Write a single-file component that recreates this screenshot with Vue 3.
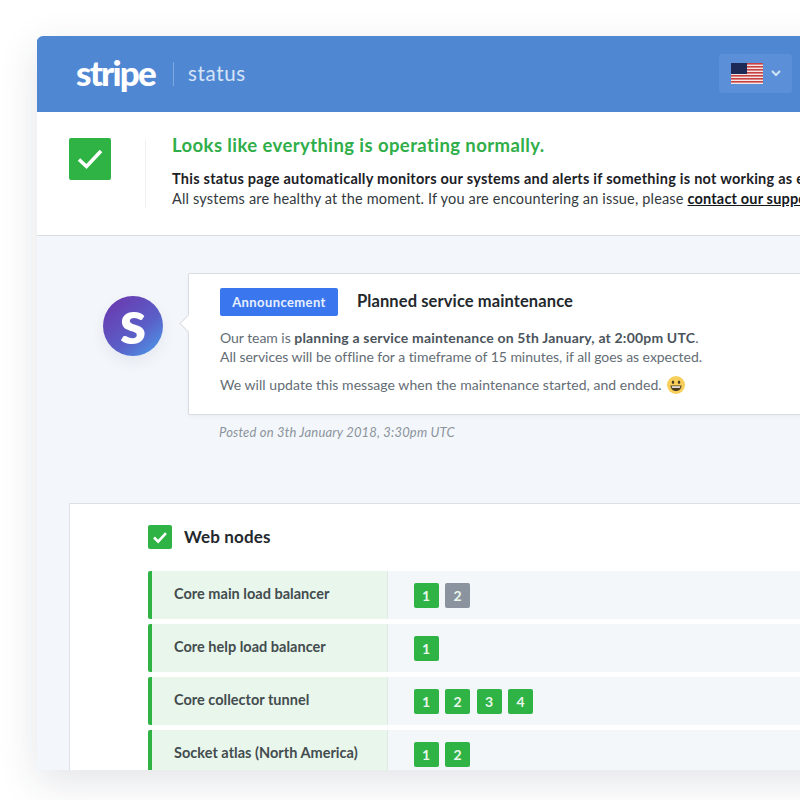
<script setup>
const rows = [
  { name: 'Core main load balancer', chips: [{ n: 1, ok: true }, { n: 2, ok: false }] },
  { name: 'Core help load balancer', chips: [{ n: 1, ok: true }] },
  { name: 'Core collector tunnel', chips: [{ n: 1, ok: true }, { n: 2, ok: true }, { n: 3, ok: true }, { n: 4, ok: true }] },
  { name: 'Socket atlas (North America)', chips: [{ n: 1, ok: true }, { n: 2, ok: true }] },
]
const stripes = [0, 1, 2, 3, 4, 5, 6]
</script>

<template>
  <div class="page">
    <div class="window">
      <header class="top">
        <span class="logo">stripe</span>
        <span class="sep"></span>
        <span class="product">status</span>
        <div class="lang">
          <svg class="flag" width="32" height="21" viewBox="0 0 32 21">
            <rect width="32" height="21" fill="#f5e6e6" />
            <rect v-for="s in stripes" :key="s" x="0" :y="s * 3" width="32" height="1.6" fill="#c8403f" />
            <rect width="16" height="11" fill="#1c2a55" />
          </svg>
          <svg width="12" height="8" viewBox="0 0 12 8"><path d="M2 2l4 4 4-4" fill="none" stroke="#cfe0f5" stroke-width="2.200" /></svg>
        </div>
      </header>

      <section class="status">
        <div class="status-icon">
          <svg width="26" height="22" viewBox="0 0 26 22"><path d="M2 11.5l7.5 7L24 3" fill="none" stroke="#fff" stroke-width="3.6" /></svg>
        </div>
        <div class="status-rule"></div>
        <div class="status-text">
          <h1>Looks like everything is operating normally.</h1>
          <p class="strong">This status page automatically monitors our systems and alerts if something is not working as expected.</p>
          <p>All systems are healthy at the moment. If you are encountering an issue, please <a>contact our support</a> team.</p>
        </div>
      </section>

      <main class="content">
        <div class="announce">
          <div class="avatar">s</div>
          <div class="announce-body">
            <div class="card">
              <div class="card-head">
                <span class="badge">Announcement</span>
                <h2>Planned service maintenance</h2>
              </div>
              <p>Our team is <b>planning a service maintenance on 5th January, at 2:00pm UTC</b>.<br />All services will be offline for a timeframe of 15 minutes, if all goes as expected.</p>
              <p class="last">We will update this message when the maintenance started, and ended.
                <svg class="emoji" width="18" height="18" viewBox="0 0 18 18">
                  <circle cx="9" cy="9" r="9" fill="#f7cf5a" />
                  <ellipse cx="6" cy="6.2" rx="1.2" ry="1.7" fill="#4b3b20" />
                  <ellipse cx="12" cy="6.2" rx="1.2" ry="1.7" fill="#4b3b20" />
                  <path d="M3.5 9.5h11c0 3.4-2.4 5.5-5.500 5.500S3.500 12.900 3.500 9.500z" fill="#4b3b20" />
                  <path d="M4.800 10.300h8.400v1.500H4.800z" fill="#fff" />
                </svg>
              </p>
            </div>
            <div class="posted">Posted on 3th January 2018, 3:30pm UTC</div>
          </div>
        </div>

        <div class="nodes">
          <div class="nodes-head">
            <div class="mini-check">
              <svg width="16" height="13" viewBox="0 0 14 12"><path d="M1.500 6l3.800 3.800L12.500 2" fill="none" stroke="#fff" stroke-width="2.400" /></svg>
            </div>
            <h3>Web nodes</h3>
          </div>
          <div class="rows">
            <div v-for="r in rows" :key="r.name" class="row">
              <div class="row-name">{{ r.name }}</div>
              <div class="row-chips">
                <span v-for="c in r.chips" :key="c.n" class="chip" :class="{ off: !c.ok }">{{ c.n }}</span>
              </div>
            </div>
          </div>
        </div>
      </main>
    </div>
  </div>
</template>

<style>
html, body { margin: 0; background: #fff; overflow: hidden; }
</style>

<style scoped>
.page {
  width: 800px;
  height: 800px;
  overflow: hidden;
  padding: 36px 0 0 37px;
  box-sizing: border-box;
  background: #fff;
  font-family: Lato, "Open Sans", sans-serif;
}
.window {
  width: 900px;
  height: 734px;
  border-radius: 6px 0 0 0;
  overflow: hidden;
  background: #f3f7fb;
  box-shadow: 0 12px 40px rgba(40, 50, 70, 0.13);
}
.top {
  height: 76px;
  background: #5087d3;
  display: flex;
  align-items: center;
  padding-left: 39px;
  box-sizing: border-box;
  width: 900px;
  box-shadow: 0 1px 0 #4a7fc8;
}
.logo {
  color: #fff;
  font-size: 35px;
  font-weight: 900;
  letter-spacing: -1.8px;
  line-height: 1;
  width: 97px;
  position: relative;
  top: -2px;
}
.sep { width: 1px; height: 24px; background: #7ea8e0; margin-right: 14px; }
.product { color: #d6e4f7; font-size: 20.500px; letter-spacing: 0.65px; position: relative; top: -1px; }
.lang {
  margin-left: 473px;
  width: 73px;
  height: 39px;
  background: #5b90d8;
  border-radius: 3px;
  display: flex;
  align-items: center;
  padding-left: 12px;
  box-sizing: border-box;
  gap: 7px;
  position: relative;
  top: -1px;
}
.status {
  height: 124px;
  background: #fff;
  border-bottom: 1px solid #d9dde2;
  box-sizing: border-box;
  display: flex;
  align-items: flex-start;
  padding: 26px 0 0 32px;
}
.status-icon {
  width: 42px;
  height: 42px;
  background: #2fb344;
  border-radius: 2px;
  display: flex;
  align-items: center;
  justify-content: center;
  flex: none;
}
.status-rule { width: 1px; height: 68px; background: #f0f1f3; margin: 2px 26px 0 34px; flex: none; }
.status-text { white-space: nowrap; }
.status-text h1 {
  margin: -5px 0 12px;
  font-size: 18.500px;
  line-height: 24px;
  font-weight: 700;
  color: #2fae49;
  letter-spacing: 0.41px;
}
.status-text p { margin: 0; font-size: 14.500px; line-height: 20px; color: #333a40; letter-spacing: 0.17px; }
.status-text .strong { color: #1c2126; font-weight: 700; letter-spacing: 0.25px; }
.status-text a { color: #15191d; font-weight: 700; text-decoration: underline; }
.content { padding: 37px 0 0 32px; }
.announce { display: flex; align-items: flex-start; }
.avatar {
  margin: 23px 25px 0 34px;
  width: 60px;
  height: 60px;
  flex: none;
  border-radius: 50%;
  background: linear-gradient(140deg, #6a3ab0 10%, #5a60c8 60%, #4aa0ee 100%);
  color: #fff;
  font-size: 60px;
  font-weight: 900;
  line-height: 50px;
  text-align: center;
  box-shadow: 0 6px 14px rgba(60, 70, 120, 0.08);
}
.card {
  position: relative;
  width: 640px;
  height: 142px;
  box-sizing: border-box;
  background: #fff;
  border: 1px solid #d8dde3;
  border-radius: 2px;
  padding: 14px 0 0 31px;
  color: #646d75;
  font-size: 14px;
  box-shadow: 0 2px 4px rgba(40, 50, 70, 0.04);
}
.card::before {
  content: "";
  position: absolute;
  left: -7px;
  top: 43px;
  width: 12px;
  height: 12px;
  background: #fff;
  border-left: 1px solid #d8dde3;
  border-bottom: 1px solid #d8dde3;
  transform: rotate(45deg);
}
.card-head { display: flex; align-items: center; gap: 19px; margin-bottom: 12px; }
.badge {
  width: 118px;
  height: 28px;
  background: #3a77ee;
  color: #e8f0ff;
  font-size: 13px;
  font-weight: 700;
  letter-spacing: 0.4px;
  display: flex;
  align-items: center;
  justify-content: center;
  border-radius: 2px;
}
.card h2 { margin: -2px 0 0; font-size: 16.500px; font-weight: 700; color: #23282d; letter-spacing: 0.1px; }
.card p { margin: 0; line-height: 19px; letter-spacing: -0.04px; white-space: nowrap; }
.card p b { color: #4b545c; font-weight: 700; letter-spacing: 0.18px; }
.card .last { margin-top: 9px; display: flex; align-items: center; gap: 5px; letter-spacing: 0.05px; }
.posted { margin: 9px 0 0 31px; font-size: 13px; font-style: italic; color: #8b939b; letter-spacing: 0.17px; }
.nodes {
  margin-top: 63px;
  height: 300px;
  background: #fff;
  border: 1px solid #dde1e6;
  border-right: 0;
  box-sizing: border-box;
  padding: 21px 0 0 78px;
}
.nodes-head { display: flex; align-items: center; gap: 12px; margin-bottom: 22px; }
.mini-check {
  width: 24px;
  height: 24px;
  background: #2fb344;
  border-radius: 2px;
  display: flex;
  align-items: center;
  justify-content: center;
}
.nodes-head h3 { margin: -1px 0 0; font-size: 17px; font-weight: 700; color: #23282d; letter-spacing: 0.15px; }
.rows { display: flex; flex-direction: column; gap: 5px; }
.row { display: flex; height: 48px; flex: none; }
.row-name {
  width: 240px;
  box-sizing: border-box;
  background: #e9f6ec;
  border-left: 4px solid #2fb344;
  border-right: 1px solid #e0eae4;
  border-radius: 2px 0 0 2px;
  padding-left: 22px;
  display: flex;
  align-items: center;
  padding-bottom: 4px;
  color: #434c4e;
  font-size: 14.500px;
  font-weight: 700;
  letter-spacing: 0.02px;
}
.row-chips {
  flex: 1;
  background: #f3f7fa;
  display: flex;
  align-items: center;
  gap: 6.500px;
  padding-left: 25.500px;
}
.chip {
  width: 25px;
  height: 25px;
  background: #2fb344;
  color: #e9f7ec;
  border-radius: 2px;
  display: flex;
  align-items: center;
  justify-content: center;
  font-size: 14px;
  font-weight: 700;
}
.chip.off { background: #8b939e; }
</style>
